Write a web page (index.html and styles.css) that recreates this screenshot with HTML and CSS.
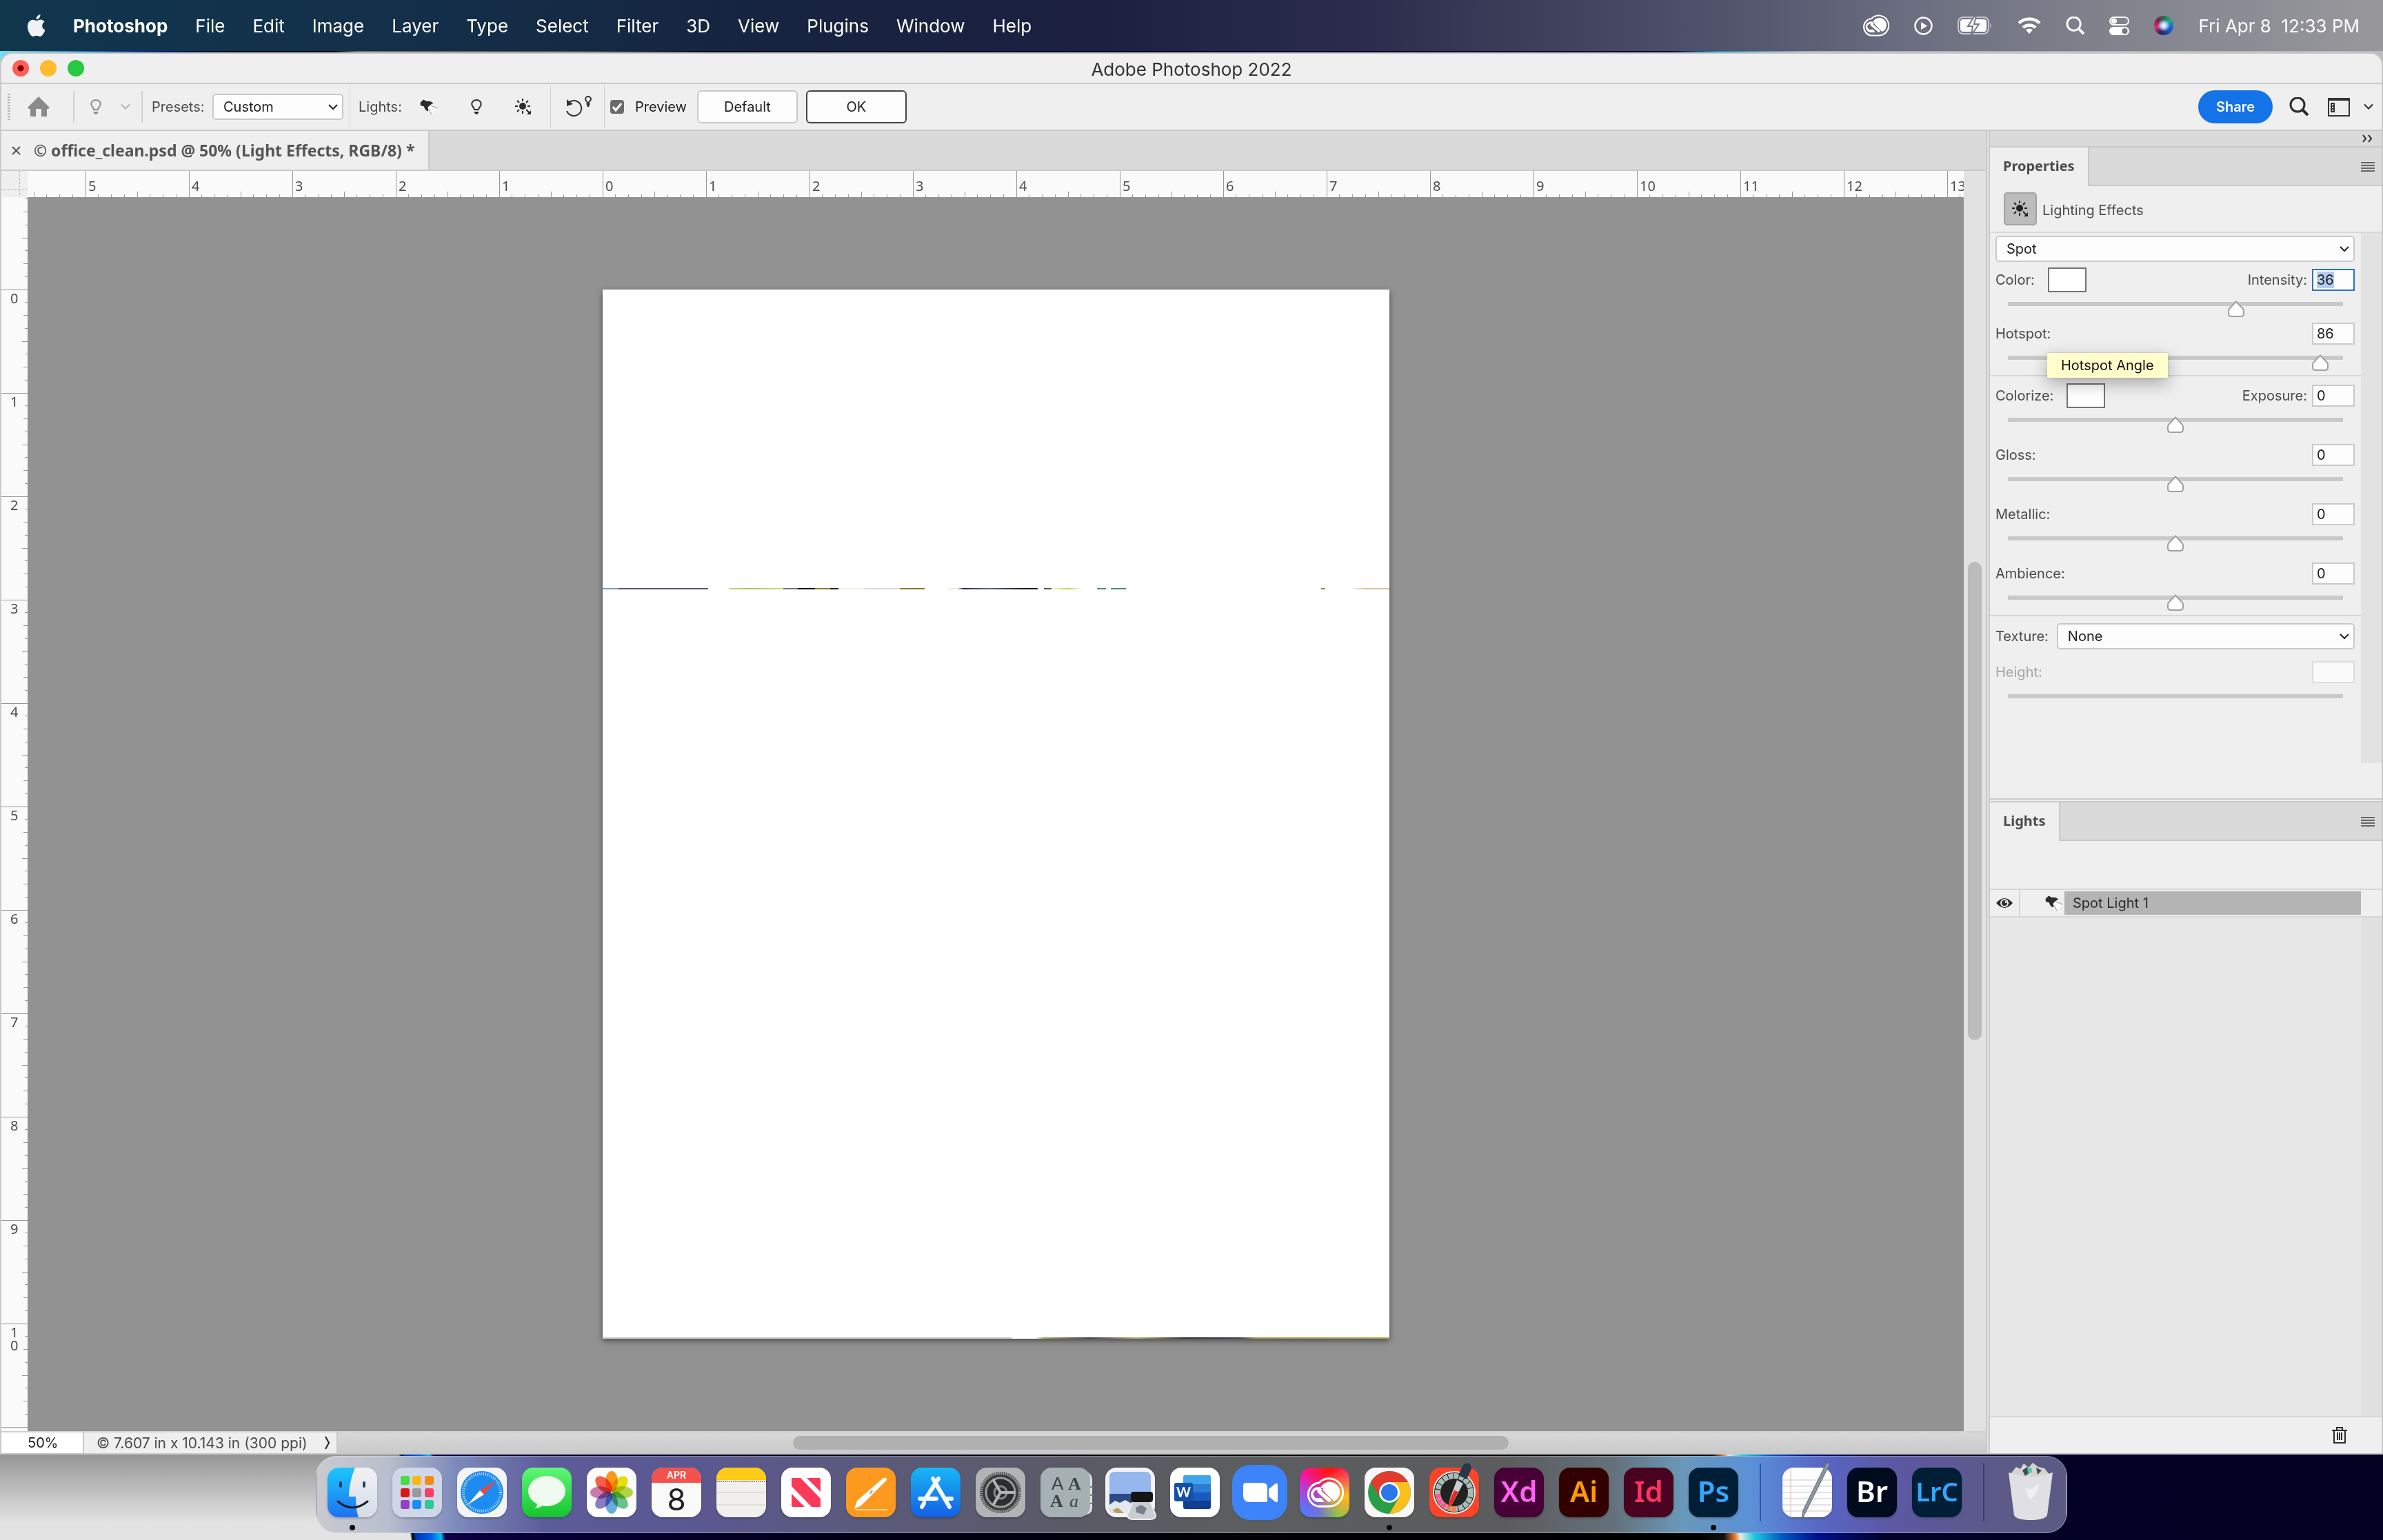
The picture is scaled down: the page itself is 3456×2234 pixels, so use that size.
FILE: index.html
```html
<!DOCTYPE html>
<html lang="en">
<head>
  <meta charset="UTF-8">
  <meta name="viewport" content="width=device-width, initial-scale=1.0">
  <title>Adobe Photoshop 2022</title>
  <link rel="stylesheet" href="styles.css">
</head>
<body>
  <!-- shared shapes -->
  <svg class="defs" aria-hidden="true">
    <symbol id="bulb" viewBox="0 0 16 22">
      <path d="M5 15C5 12 1.2 11 1.2 6.8a6.8 5.8 0 0 1 13.6 0C14.800 11 11 12 11 15Z" fill="none" stroke="currentColor" stroke-width="2"/>
      <path d="M4 18h8L9.500 21.500h-3Z" fill="currentColor"/>
    </symbol>
    <symbol id="spot" viewBox="0 0 26 22">
      <path d="M.5 5 5 .5l5 2.500c4-1 8 .5 9.500 3.500l-3 1-5 4.500 1 5.500C9 17 6.500 14 6 10.500L1 9Z" fill="currentColor"/>
      <path d="m12 11 6-5 8 7.500-9 8.500-5-4Z" fill="#fafafa"/>
      <path d="m16 9 9.500 4M12.500 14l4.500 8" stroke="#888" fill="none"/>
    </symbol>
    <symbol id="sun" viewBox="0 0 24 24">
      <circle cx="11" cy="11" r="5" fill="currentColor"/>
      <path d="M11 0v4M11 18v4M0 11h4M18 11h4M3 3l3 3M16 6l3-3M3 19l3-3M16 16l5 5" stroke="currentColor" stroke-width="2"/>
      <path d="M17 23h6v-6Z" fill="currentColor"/>
    </symbol>
    <symbol id="chevron" viewBox="0 0 14 10"><path d="m1 1.500 6 6 6-6" fill="none" stroke="currentColor" stroke-width="2"/></symbol>
    <symbol id="search" viewBox="0 0 28 28">
      <circle cx="12" cy="11" r="10" fill="none" stroke="currentColor" stroke-width="3"/>
      <path d="m19 18 8 8" stroke="currentColor" stroke-width="4"/>
    </symbol>
    <symbol id="lines" viewBox="0 0 20 14"><path d="M0 1h20M0 5h20M0 9h20M0 13h20" stroke="currentColor" stroke-width="2"/></symbol>
    <symbol id="cloud" viewBox="12 20 76 60">
      <path d="M37 77.500H59A27.500 27.500 0 1 0 39 31 A23.500 23.500 0 0 0 37 77.500Z" fill="none" stroke="#fff" stroke-width="4"/>
      <path d="M60 69a20 20 0 1 0-18-28l26 26ZM50 69H38a15 15 0 1 1 10-26l-6 5a8 8 0 1 0-4 13h5Z" fill="#fff"/>
      <path d="m39 48 20 17" stroke="#fff" stroke-width="7" stroke-linecap="round"/>
    </symbol>
  </svg>

  <header class="menubar">
    <svg class="apple" viewBox="0 0 26 32" fill="#eef2f5"><path d="M18.500 0c.3 3.800-2.900 7.300-6 7.200C12 3.700 15.200.3 18.500 0Z"/><path d="M13.300 9c1.400 0 3-1.400 5.500-1.400 2.100 0 4.300 1.100 5.700 3.200-5 3-4 9.800 1 11.700C24 27 20.800 32 18 32c-2 0-2.600-1.200-5-1.200S9.700 32 8 32C4.500 32 0 24.500 0 17.600 0 11 4 7.700 7.700 7.700c2.400 0 4.200 1.300 5.600 1.300Z"/></svg>
    <nav class="menus">
      <button class="app-name">Photoshop</button>
      <button>File</button><button>Edit</button><button>Image</button><button>Layer</button>
      <button>Type</button><button>Select</button><button>Filter</button><button>3D</button>
      <button>View</button><button>Plugins</button><button>Window</button><button>Help</button>
    </nav>
    <div class="status-icons">
      <svg width="40" height="32"><use href="#cloud"/></svg>
      <svg width="27" height="27" viewBox="0 0 27 27"><circle cx="13.500" cy="13.500" r="12" fill="none" stroke="#fff" stroke-width="2.500"/><path d="M10 8v11l9-5.500Z" fill="#fff"/></svg>
      <svg width="51" height="26" viewBox="0 0 51 26"><rect x="1" y="1" width="44" height="24" rx="7" fill="none" stroke="#c4c7d0" stroke-width="2"/><rect x="4" y="4" width="38" height="18" rx="4" fill="#fff"/><path d="M47.500 9q3 4 0 8Z" fill="#c4c7d0"/><path d="m25-1-10 15h7l-2 13 11-16h-7l3-12Z" fill="#fff" stroke="#73778a" stroke-width="2"/></svg>
      <svg width="34" height="26" viewBox="0 0 34 26" fill="none" stroke="#fff" stroke-width="4.500"><path d="M2 9.500a21.500 21.500 0 0 1 30 0M8 16a13 13 0 0 1 18 0"/><path d="m17 25-5-5.500q5-4 10 0Z" fill="#fff" stroke="none"/></svg>
      <svg width="27" height="27"><use href="#search"/></svg>
      <svg width="29" height="27" viewBox="0 0 29 27"><rect x="1" y="1" width="27" height="11" rx="5.500" fill="none" stroke="#fff" stroke-width="2"/><circle cx="7" cy="6.500" r="4" fill="#fff"/><rect y="15" width="29" height="12" rx="6" fill="#fff"/><circle cx="22.500" cy="21" r="4" fill="#747785"/></svg>
      <span class="siri"></span>
      <time>Fri Apr 8 &nbsp;12:33 PM</time>
    </div>
  </header>

  <main class="window">
    <div class="titlebar">
      <div class="lights"><button class="red" aria-label="Close"></button><button class="yellow" aria-label="Minimize"></button><button class="green" aria-label="Zoom"></button></div>
      <h1>Adobe Photoshop 2022</h1>
    </div>

    <div class="options">
      <span class="grip"></span>
      <button class="home" aria-label="Home"><svg width="32" height="30" viewBox="0 0 32 30"><path d="M16 0 32 16l-2 2h-2v11h-8V18h-8v11H4V18H2l-2-2Z" fill="#8b8b8b"/></svg></button>
      <span class="sep short"></span>
      <button class="tool-menu" aria-label="Tool"><svg width="16" height="22"><use href="#bulb"/></svg><svg class="faint" width="14" height="10"><use href="#chevron"/></svg></button>
      <span class="sep short"></span>
      <label class="presets" for="presets">Presets:</label>
      <select id="presets" class="preset-select"><option>Custom</option></select>
      <span class="sep"></span>
      <div class="light-tools">
        <span>Lights:</span>
        <button aria-label="Spot light"><svg width="26" height="22"><use href="#spot"/></svg></button>
        <button aria-label="Point light"><svg width="16" height="22"><use href="#bulb"/></svg></button>
        <button aria-label="Infinite light"><svg width="24" height="24"><use href="#sun"/></svg></button>
      </div>
      <span class="sep"></span>
      <button class="reset" aria-label="Reset light"><svg width="38" height="32" viewBox="0 0 38 32"><path d="M5 10A11 11 0 1 1 1 23" transform="translate(0 -1)" fill="none" stroke="#333" stroke-width="2"/><path d="M1 5v10l9-3Z" fill="#333"/><path d="M32 12c0-4-4-4-4-7a4 4 0 0 1 8 0c0 3-4 3-4 7Z" fill="none" stroke="#333" stroke-width="2"/><path d="M29 11h6l-2 5h-2Z" fill="#333"/></svg></button>
      <span class="sep"></span>
      <input type="checkbox" id="preview" checked>
      <label class="preview" for="preview">Preview</label>
      <button class="btn">Default</button>
      <button class="btn primary">OK</button>
      <div class="options-right">
        <button class="share">Share</button>
        <button aria-label="Search"><svg width="28" height="28"><use href="#search"/></svg></button>
        <button class="layout" aria-label="Workspace"><svg width="32" height="27" viewBox="0 0 32 27"><path d="M1 1h30v25H1Z" fill="none" stroke="#333" stroke-width="2"/><path d="M0 0h32v4H0ZM4 7h6v14H4Z" fill="#333"/><path d="M6 9h2v2H6zM6 13h2v2H6zM6 17h2v2H6z" fill="#efefef"/></svg><svg width="14" height="10"><use href="#chevron"/></svg></button>
      </div>
    </div>

    <div class="workspace">
      <section class="document">
        <div class="doc-tabs">
          <div class="doc-tab"><button aria-label="Close tab"><svg width="13" height="13" viewBox="0 0 13 13"><path d="m1 1 11 11M12 1 1 12" stroke="#555" stroke-width="2"/></svg></button><span>© office_clean.psd @ 50% (Light Effects, RGB/8) *</span></div>
        </div>
        <div class="view">
          <div class="corner"></div>
          <div class="ruler-x"><span>5</span><span>4</span><span>3</span><span>2</span><span>1</span><span>0</span><span>1</span><span>2</span><span>3</span><span>4</span><span>5</span><span>6</span><span>7</span><span>8</span><span>9</span><span>10</span><span>11</span><span>12</span><span>13</span></div>
          <div class="scroll-y"><div class="thumb"></div></div>
          <div class="ruler-y"><span>0</span><span>1</span><span>2</span><span>3</span><span>4</span><span>5</span><span>6</span><span>7</span><span>8</span><span>9</span><span>1<br>0</span><span>1</span></div>
          <div class="canvas"><div class="page"><div class="streak"></div><div class="streak-bottom"></div></div></div>
        </div>
        <div class="statusbar">
          <input class="zoom" aria-label="Zoom level" value="50%">
          <button class="doc-info"><span>© 7.607 in x 10.143 in (300 ppi)</span><svg width="8" height="20" viewBox="0 0 8 20"><path d="m1 1 5 9-5 9" fill="none" stroke="#222" stroke-width="2"/></svg></button>
          <div class="scroll-x"><div class="thumb"></div></div>
        </div>
      </section>

      <aside class="panels">
        <section class="properties">
          <div class="collapse"><button aria-label="Collapse panels"><svg width="16" height="12" viewBox="0 0 16 12"><path d="m1 1 4 5-4 5M9 1l4 5-4 5" fill="none" stroke="#222" stroke-width="2"/></svg></button></div>
          <div class="panel-tabs"><h2>Properties</h2><button aria-label="Panel menu"><svg width="20" height="14"><use href="#lines"/></svg></button></div>
          <div class="panel-head"><span class="badge"><svg width="24" height="24"><use href="#sun"/></svg></span><span class="head-text">Lighting Effects</span></div>
          <form class="props">
            <div class="group first">
              <select class="kind" aria-label="Light type"><option>Spot</option></select>
              <div class="prop">
                <div class="line"><span>Color:</span><button type="button" class="swatch" aria-label="Color"></button><label for="intensity">Intensity:</label><input id="intensity" class="num" value="36"></div>
                <input type="range" aria-label="Intensity" min="-100" max="100" value="38">
              </div>
              <div class="prop">
                <div class="line"><label for="hotspot">Hotspot:</label><input id="hotspot" class="num" value="86"></div>
                <input type="range" aria-label="Hotspot" min="0" max="90" value="86">
                <div class="tooltip" role="tooltip">Hotspot Angle</div>
              </div>
            </div>
            <div class="group">
              <div class="prop">
                <div class="line"><span>Colorize:</span><button type="button" class="swatch" aria-label="Colorize"></button><label for="exposure">Exposure:</label><input id="exposure" class="num" value="0"></div>
                <input type="range" aria-label="Exposure" min="-100" max="100" value="0">
              </div>
              <div class="prop">
                <div class="line"><label for="gloss">Gloss:</label><input id="gloss" class="num" value="0"></div>
                <input type="range" aria-label="Gloss" min="-100" max="100" value="0">
              </div>
              <div class="prop">
                <div class="line"><label for="metallic">Metallic:</label><input id="metallic" class="num" value="0"></div>
                <input type="range" aria-label="Metallic" min="-100" max="100" value="0">
              </div>
              <div class="prop">
                <div class="line"><label for="ambience">Ambience:</label><input id="ambience" class="num" value="0"></div>
                <input type="range" aria-label="Ambience" min="-100" max="100" value="0">
              </div>
            </div>
            <div class="group last">
              <div class="texture"><label for="texture">Texture:</label><select id="texture"><option>None</option></select></div>
              <div class="prop disabled">
                <div class="line"><label for="height">Height:</label><input id="height" class="num" disabled></div>
                <input type="range" aria-label="Height" disabled>
              </div>
            </div>
          </form>
        </section>

        <section class="lights-panel">
          <div class="panel-tabs"><h2>Lights</h2><button aria-label="Panel menu"><svg width="20" height="14"><use href="#lines"/></svg></button></div>
          <ul class="light-list">
            <li>
              <button class="eye" aria-label="Visibility"><svg width="26" height="18" viewBox="0 0 26 18"><path d="M1 9Q13-5 25 9 13 23 1 9Z" fill="#2c2c2c"/><circle cx="13" cy="9" r="6" fill="#f0f0f0"/><circle cx="13" cy="9" r="4" fill="#2c2c2c"/><circle cx="15" cy="7.500" r="1.500" fill="#f0f0f0"/></svg></button>
              <span class="kind-icon"><svg width="26" height="22"><use href="#spot"/></svg></span>
              <span class="light-name">Spot Light 1</span>
            </li>
          </ul>
          <div class="list-rest"></div>
          <div class="panel-foot"><button aria-label="Delete"><svg width="22" height="24" viewBox="0 0 22 24" fill="none" stroke="#2c2c2c" stroke-width="2"><path d="M0 5h22M7 5V1h8v4M3 5v18h16V5M8 8v11M11 8v11M14 8v11"/></svg></button></div>
        </section>
      </aside>
    </div>
  </main>

  <footer class="desktop">
    <div class="dock">
      <a href="#" class="icon running" aria-label="Finder"><svg viewBox="0 0 72 72"><defs><linearGradient id="f1" x2="0" y2="1"><stop stop-color="#1ac8fd"/><stop offset="1" stop-color="#2071f1"/></linearGradient><linearGradient id="f2" x2="0" y2="1"><stop stop-color="#f1f1f3"/><stop offset="1" stop-color="#d6dde8"/></linearGradient></defs><rect width="72" height="72" rx="16" fill="url(#f2)"/><path d="M16 0h24C34 15 31 28 31 42h10c0 12 1 21 4 30H16A16 16 0 0 1 0 56V16A16 16 0 0 1 16 0Z" fill="url(#f1)"/><path d="M19 22v5M53 22v5" stroke="#27415b" stroke-width="4" stroke-linecap="round"/><path d="M15 49q21 18 43 0" fill="none" stroke="#18202c" stroke-width="3" stroke-linecap="round"/></svg></a>
      <a href="#" class="icon" aria-label="Launchpad"><svg viewBox="0 0 72 72"><rect width="72" height="72" rx="16" fill="#d0d7e8"/><g><rect x="12" y="12" width="13" height="13" rx="3" fill="#48dc48"/><rect x="29" y="12" width="13" height="13" rx="3" fill="#fdb814"/><rect x="47" y="12" width="13" height="13" rx="3" fill="#f58a14"/><rect x="12" y="30" width="13" height="13" rx="3" fill="#d81818"/><rect x="29" y="30" width="13" height="13" rx="3" fill="#989a9e"/><rect x="47" y="30" width="13" height="13" rx="3" fill="#fa3d62"/><rect x="12" y="47" width="13" height="13" rx="3" fill="#9440c8"/><rect x="29" y="47" width="13" height="13" rx="3" fill="#1590f4"/><rect x="47" y="47" width="13" height="13" rx="3" fill="#30c898"/></g></svg></a>
      <a href="#" class="icon" aria-label="Safari"><svg viewBox="0 0 72 72"><rect width="72" height="72" rx="16" fill="#f4f4f5"/><circle cx="36" cy="36" r="31" fill="#1e8bf0"/><circle cx="36" cy="36" r="27" fill="none" stroke="#d8ecff" stroke-width="4" stroke-dasharray="1 2"/><path d="m57 18-18 21-6-6Z" fill="#f04438"/><path d="m15 54 18-21 6 6Z" fill="#fff"/></svg></a>
      <a href="#" class="icon" aria-label="Messages"><svg viewBox="0 0 72 72"><defs><linearGradient id="m" x2="0" y2="1"><stop stop-color="#5ff777"/><stop offset="1" stop-color="#14c52e"/></linearGradient></defs><rect width="72" height="72" rx="16" fill="url(#m)"/><ellipse cx="36" cy="34" rx="27" ry="22" fill="#eefbee"/><path d="M22 50q1 6-4 9 9 0 13-5Z" fill="#dcf7dc"/></svg></a>
      <a href="#" class="icon" aria-label="Photos"><svg viewBox="0 0 72 72"><rect width="72" height="72" rx="16" fill="#fcfcfc"/><g class="petals"><ellipse cx="36" cy="20" rx="9" ry="15" fill="#fb9a1c"/><ellipse cx="36" cy="20" rx="9" ry="15" fill="#e8e012" transform="rotate(45 36 36)"/><ellipse cx="36" cy="20" rx="9" ry="15" fill="#b4d648" transform="rotate(90 36 36)"/><ellipse cx="36" cy="20" rx="9" ry="15" fill="#6cc490" transform="rotate(135 36 36)"/><ellipse cx="36" cy="20" rx="9" ry="15" fill="#6cace0" transform="rotate(180 36 36)"/><ellipse cx="36" cy="20" rx="9" ry="15" fill="#8a80c4" transform="rotate(225 36 36)"/><ellipse cx="36" cy="20" rx="9" ry="15" fill="#cc7cb0" transform="rotate(270 36 36)"/><ellipse cx="36" cy="20" rx="9" ry="15" fill="#f8604c" transform="rotate(315 36 36)"/></g></svg></a>
      <a href="#" class="icon calendar"><span class="month">APR</span><span class="day">8</span></a>
      <a href="#" class="icon" aria-label="Notes"><svg viewBox="0 0 72 72"><rect width="72" height="72" rx="16" fill="#f1f0ec"/><path d="M0 18v-2A16 16 0 0 1 16 0h40a16 16 0 0 1 16 16v2Z" fill="#fdcb18"/><path d="M0 20h72" stroke="#a09a80" stroke-width="2" stroke-dasharray="2 1"/><path d="M0 36h72M0 54h72" stroke="#cfcdc6"/></svg></a>
      <a href="#" class="icon" aria-label="News"><svg viewBox="0 0 72 72"><rect width="72" height="72" rx="16" fill="#fff"/><path d="M15 15h13l29 30v12H44L15 27ZM37 15h18q2 0 2 2v18ZM15 38l19 19H17q-2 0-2-2Z" fill="#fb3a5a"/></svg></a>
      <a href="#" class="icon" aria-label="Pages"><svg viewBox="0 0 72 72"><rect width="72" height="72" rx="16" fill="#fc9a20"/><path d="M14 61h46" stroke="#ffd9a0" stroke-width="2"/><path d="m12 60 4-12 38-33q5-2 5 3L22 55Z" fill="#fdfdfd"/><path d="m35 38 3-5" stroke="#999" stroke-width="2"/></svg></a>
      <a href="#" class="icon" aria-label="App Store"><svg viewBox="0 0 72 72"><defs><linearGradient id="as" x2="0" y2="1"><stop stop-color="#17b7f7"/><stop offset="1" stop-color="#165fe4"/></linearGradient></defs><rect width="72" height="72" rx="16" fill="url(#as)"/><path d="m40 16-20 31M32 16l24 41M13 45h24M49 45h10M19 52l-3 5" stroke="#f4faff" stroke-width="6" stroke-linecap="round"/></svg></a>
      <a href="#" class="icon" aria-label="System Preferences"><svg viewBox="0 0 72 72"><rect width="72" height="72" rx="16" fill="#b0b4b4"/><circle cx="36" cy="36" r="30" fill="#3a3b3d"/><circle cx="36" cy="36" r="28" fill="none" stroke="#999" stroke-width="4" stroke-dasharray="2 1"/><circle cx="36" cy="36" r="21" fill="#2c2d2f" stroke="#9b9b9b" stroke-width="3"/><circle cx="36" cy="36" r="9" fill="none" stroke="#888" stroke-width="3"/><path d="M36 36h21M36 36 25 17M36 36 25 55" stroke="#b4b4b4" stroke-width="4"/></svg></a>
      <a href="#" class="icon" aria-label="Font Book"><svg viewBox="0 0 72 72" class="fontbook"><path d="M60 5q15 0 15 14v40q0 8-12 10Z" fill="#dfe2e2"/><path d="M70 28h6M70 40h6M70 52h6" stroke="#777" stroke-width="2"/><rect width="72" height="72" rx="16" fill="#a6b1b4"/><text x="16" y="32" font-family="Liberation Sans">A</text><text x="40" y="32" font-family="Liberation Serif" font-weight="bold">A</text><text x="14" y="57" font-family="Liberation Serif" font-weight="bold">A</text><text x="42" y="57" font-family="Liberation Serif" font-style="italic">a</text></svg></a>
      <a href="#" class="icon" aria-label="Preview"><svg viewBox="0 0 72 72"><rect width="72" height="72" rx="16" fill="#f2f3f4"/><path d="M14 6h44q8 0 8 8v26H6V14q0-8 8-8Z" fill="#96b6ee"/><path d="M6 38h60v20q0 8-8 8H14q-8 0-8-8Z" fill="#2c4a84"/><path d="m6 54 8-6 7 3 8-4 9 5 7-2-4 16H14q-8 0-8-8Z" fill="#e2e8ee"/><path d="m10 62 8-4 9 8H16Z" fill="#b99b62"/><path d="M40 49h25l8 20q0 6-8 6H40q-8 0-8-6Z" fill="#c9cdd1" stroke="#eee" stroke-width="2"/><path d="m44 58 8-4 8 5-4 9-11-3Z" fill="#777f8c"/><rect x="37" y="35" width="32" height="15" rx="4" fill="#141414"/></svg></a>
      <a href="#" class="icon" aria-label="Word"><svg viewBox="0 0 72 72"><rect width="72" height="72" rx="16" fill="#fff"/><path d="M21 11h36q2 0 2 3v10H19V14q0-3 2-3Z" fill="#41a5ee"/><path d="M19 24h40v12H19Z" fill="#2b7cd3"/><path d="M19 36h40v12H19Z" fill="#185abd"/><path d="M19 48h40v9q0 3-3 3H22q-3 0-3-3Z" fill="#103f91"/><rect x="6" y="22" width="27" height="27" rx="3" fill="#1450a8"/><text x="9" y="43" font-family="Lato" font-weight="bold" font-size="20" fill="#fff">W</text></svg></a>
      <a href="#" class="icon" aria-label="Zoom"><svg viewBox="0 0 72 72"><rect x="-4" y="-4" width="80" height="80" rx="26" fill="#3d84fb"/><path d="M16 22h24q7 0 7 7v21H22q-10 0-10-9V26q0-4 4-4ZM49 31l10-8q3-1 3 2v23q0 3-3 2l-10-8Z" fill="#fff"/></svg></a>
      <a href="#" class="icon creative" aria-label="Creative Cloud"><svg viewBox="0 0 72 72"><use href="#cloud" x="8" y="14" width="56" height="44"/></svg></a>
      <a href="#" class="icon running" aria-label="Chrome"><svg viewBox="0 0 72 72"><rect width="72" height="72" rx="16" fill="#f7f7f7"/><circle cx="36" cy="36" r="31" fill="#2a9d48"/><path d="M9 21A31 31 0 0 1 63 21H36L23 44Z" fill="#e33b2e"/><path d="M36 21h27a31 31 0 0 1-27 46l14-24Z" fill="#fcc01e"/><circle cx="36" cy="36" r="15" fill="#fff"/><circle cx="36" cy="36" r="12" fill="#2b76ea"/></svg></a>
      <a href="#" class="icon" aria-label="Digital Color Meter"><svg viewBox="0 0 72 72"><rect width="72" height="72" rx="16" fill="#fd4328"/><circle cx="36" cy="36" r="30" fill="#222" stroke="#eee" stroke-width="2"/><circle cx="36" cy="36" r="24" fill="none" stroke="#a9bdb8" stroke-width="8" stroke-dasharray="7 1"/><path d="M12 38a24 24 0 0 0 12 19" fill="none" stroke="#f85a90" stroke-width="8" stroke-dasharray="7 1"/><path d="M25 57a24 24 0 0 0 14 3" fill="none" stroke="#f08458" stroke-width="8" stroke-dasharray="7 1"/><path d="m40 18 9 5-16 30-6 5 3-14Z" fill="#c8ced0"/><path d="m36 33 6 2-9 18-6 5 2-10Z" fill="#e32c22"/><path d="m47 0q4-8 10-6 6 3 3 10l-6 13-12-6Z" fill="#26384a"/></svg></a>
      <a href="#" class="icon adobe xd">Xd</a>
      <a href="#" class="icon adobe ai">Ai</a>
      <a href="#" class="icon adobe id">Id</a>
      <a href="#" class="icon adobe ps running">Ps</a>
      <span class="dock-sep"></span>
      <a href="#" class="icon" aria-label="TextEdit"><svg viewBox="0 0 72 72"><rect width="72" height="72" rx="16" fill="#fdfdfd"/><path d="M0 18h72M0 27h72M0 36h72M0 45h72M0 54h72M0 63h72" stroke="#c9c9c9"/><path d="M12 0v72" stroke="#f3b4b4"/><path d="m64-7 5 1-35 70-6 12 2-14Z" fill="#8796a4" stroke="#5c6771"/></svg></a>
      <a href="#" class="icon adobe br">Br</a>
      <a href="#" class="icon adobe lrc">LrC</a>
      <span class="dock-sep"></span>
      <a href="#" class="icon trash" aria-label="Trash"><svg viewBox="0 0 72 72"><path d="m7 9 8-10 6 3 5-8 7 6 6-7 8 6 9 2 8 10-20 6H17Z" fill="#d5d2d0"/><path d="m24 4 7-5 4 8-7 5ZM44 0l8 4-6 6Z" fill="#3f4a55"/><path d="m31 2 6-2 1 7-6 1Z" fill="#48c8a0"/><path d="M4 7q32 12 64 0l-8 62q-3 7-24 7T12 69Z" fill="#e0e0e4"/><path d="M28 30q12 4 20-8-2 20-14 24Z" fill="#f0f0f2"/></svg></a>
    </div>
  </footer>
  <script>
    document.getElementById('intensity').select();
  </script>
</body>
</html>
```
FILE: styles.css
```css
* {
  box-sizing: border-box;
}
body {
  margin: 0;
  height: 100vh;
  display: flex;
  flex-direction: column;
  overflow: hidden;
  font-family: Inter, "Liberation Sans", sans-serif;
  font-size: 20px;
  color: #4b4b4b;
  background: linear-gradient(90deg, #7adcf0 0, #1a9ccc 3%, #0428a0 6%, #000 10%, #000 14%, #777 15%, #555 24%, #010020 30%, #020230 70%, #2088c0 72%, #a8b0b8 76%, #bbb 100%);
}
button, input, select {
  font: inherit;
  color: inherit;
}
button {
  padding: 0;
  border: none;
  background: none;
}
a {
  text-decoration: none;
}
svg {
  display: block;
  overflow: visible;
}
.defs {
  position: absolute;
  width: 0;
  height: 0;
}

/* menu bar */
.menubar {
  flex: none;
  height: 74px;
  margin-bottom: 2px;
  padding: 0 34px 0 40px;
  display: flex;
  align-items: center;
  color: #fff;
  font-size: 26px;
  background: linear-gradient(90deg, #10364c 0%, #13304a 16%, #16243f 32%, #1b2040 45%, #2b2c4b 57%, #55586f 74%, #686b7e 79%, #7d7f8a 87%, #98989c 100%);
}
.apple {
  width: 26px;
  height: 32px;
  margin-right: 40px;
}
.menus {
  display: flex;
  gap: 40px;
}
.app-name {
  font-weight: 700;
}
.status-icons {
  margin-left: auto;
  display: flex;
  align-items: center;
  gap: 36px;
}
.siri {
  width: 28px;
  height: 28px;
  border-radius: 50%;
  background: radial-gradient(circle, #fff 0, #b8dcff 18%, transparent 45%), conic-gradient(#2a6a50, #18b080, #2060e0, #1848a0, #302060, #e03070, #802048, #2a6a50);
}

/* window */
.window {
  flex: 1;
  min-height: 0;
  display: flex;
  flex-direction: column;
  border: 2px solid #c9c9c9;
  border-radius: 18px 18px 0 0;
  background: #efefef;
}
.titlebar {
  flex: none;
  height: 44px;
  padding: 0 16px;
  display: grid;
  grid-template-columns: 1fr auto 1fr;
  align-items: center;
  border-bottom: 2px solid #c9c9c9;
}
.titlebar h1 {
  margin: 0;
  padding-top: 2px;
  font-size: 26px;
  font-weight: 400;
  color: #333;
}
.lights {
  display: flex;
  gap: 16px;
}
.lights button {
  width: 24px;
  height: 24px;
  border-radius: 50%;
}
.red {
  background: radial-gradient(circle, #780000 4px, #fe5f57 5px);
}
.yellow {
  background: #febc2e;
}
.green {
  background: #28c840;
}

/* options bar */
.options {
  flex: none;
  height: 68px;
  display: flex;
  align-items: center;
  border-bottom: 2px solid #c9c9c9;
}
.grip {
  width: 4px;
  height: 38px;
  margin: 0 25px 0 9px;
  background: repeating-linear-gradient(#b4b4b4 0 2px, transparent 2px 4px);
}
.sep {
  width: 1px;
  height: 62px;
  background: #d2d2d2;
}
.sep.short {
  width: 2px;
  height: 46px;
}
.home {
  margin-right: 34px;
}
.tool-menu {
  display: flex;
  align-items: center;
  gap: 28px;
  margin: 0 16px 0 23px;
  color: #8b8b8b;
}
.faint {
  color: #b4b4b4;
}
.presets {
  width: 88px;
  margin-left: 13px;
}
select {
  appearance: none;
  height: 38px;
  padding: 0 14px;
  border: 2px solid #c9c9c9;
  border-radius: 5px;
  color: #222;
  background: #fdfdfd url("data:image/svg+xml,%3Csvg xmlns='http://www.w3.org/2000/svg' width='14' height='10'%3E%3Cpath d='m1 2 6 6 6-6' fill='none' stroke='%23222' stroke-width='2'/%3E%3C/svg%3E") no-repeat right 6px center;
}
.preset-select {
  width: 190px;
  margin-right: 9px;
}
.light-tools {
  display: flex;
  align-items: center;
  gap: 48px;
  padding: 0 27px 0 12px;
}
.light-tools span {
  margin-right: -22px;
}
.light-tools button {
  color: #2c2c2c;
}
.reset {
  margin: 0 17px 0 22px;
}
#preview {
  appearance: none;
  width: 20px;
  height: 20px;
  margin: 0 16px 0 8px;
  border-radius: 4px;
  background: #6a6a6a url("data:image/svg+xml,%3Csvg xmlns='http://www.w3.org/2000/svg' width='20' height='20'%3E%3Cpath d='m4 10 4 5 8-10' fill='none' stroke='%23fff' stroke-width='3'/%3E%3C/svg%3E");
}
.preview {
  width: 90px;
  color: #222;
}
.btn {
  width: 146px;
  height: 48px;
  margin-right: 12px;
  border: 2px solid #c9c9c9;
  border-radius: 6px;
  background: #fdfdfd;
  color: #222;
}
.btn.primary {
  border-color: #444;
}
.options-right {
  margin-left: auto;
  padding-right: 12px;
  display: flex;
  align-items: center;
  gap: 24px;
  color: #2c2c2c;
}
.share {
  width: 108px;
  height: 48px;
  border-radius: 24px;
  background: #1473e6;
  color: #fff;
  font-weight: 600;
}
.layout {
  display: flex;
  align-items: center;
  gap: 20px;
  margin-left: 4px;
}

/* document */
.workspace {
  flex: 1;
  min-height: 0;
  display: flex;
  gap: 2px;
  background: #e2e2e2;
}
.document {
  flex: 1;
  min-width: 0;
  display: flex;
  flex-direction: column;
  border-right: 2px solid #c9c9c9;
}
.doc-tabs {
  flex: none;
  height: 58px;
  display: flex;
  background: #dadada;
  border-bottom: 2px solid #c9c9c9;
}
.doc-tab {
  display: flex;
  align-items: center;
  gap: 19px;
  padding: 0 20px 0 15px;
  border-right: 2px solid #c9c9c9;
  background: #efefef;
  font-family: "Noto Sans", sans-serif;
  font-size: 23px;
  font-weight: 700;
  color: #555;
}
.view {
  flex: 1;
  min-height: 0;
  display: grid;
  grid-template-columns: 38px 1fr 32px;
  grid-template-rows: 38px 1fr;
}
.corner {
  background:
    repeating-linear-gradient(90deg, #aaa 0 1px, transparent 1px 2px) 0 26px / 100% 1px no-repeat,
    repeating-linear-gradient(#aaa 0 1px, transparent 1px 2px) 26px 0 / 1px 100% no-repeat,
    #efefef;
}
.ruler-x, .ruler-y {
  display: flex;
  overflow: hidden;
  background-color: #fafafa;
  font-family: "Noto Sans", sans-serif;
  line-height: 19px;
}
.ruler-x {
  grid-column: 2;
  padding: 12px 0 0 84px;
  background-image: url("data:image/svg+xml,%3Csvg xmlns='http://www.w3.org/2000/svg' width='150' height='38'%3E%3Cpath d='M.5 0v38M18.500 34v4M37.500 34v4M56.500 34v4M75.500 30v8M93.500 34v4M112.500 34v4M131.500 34v4' stroke='%23999'/%3E%3C/svg%3E");
  background-position: 84px 0;
}
.ruler-x span {
  flex: none;
  width: 150px;
  padding-left: 4px;
}
.ruler-y {
  grid-column: 1;
  grid-row: 2;
  flex-direction: column;
  padding-top: 134px;
  background-image: url("data:image/svg+xml,%3Csvg xmlns='http://www.w3.org/2000/svg' width='38' height='150'%3E%3Cpath d='M0 .5h38M34 18.500h4M32 37.500h6M34 56.500h4M30 75.500h8M34 93.500h4M32 112.500h6M34 131.500h4' stroke='%23999'/%3E%3C/svg%3E");
  background-position: 0 134px;
}
.ruler-y span {
  flex: none;
  height: 150px;
  padding: 3px 0 0 13px;
}
.scroll-y {
  grid-column: 3;
  grid-row: 1 / 3;
  display: flex;
  align-items: center;
  justify-content: center;
  background: #e2e2e2;
}
.thumb {
  border-radius: 10px;
  background: #bcbcbc;
}
.scroll-y .thumb {
  width: 20px;
  height: 38%;
}
.canvas {
  display: grid;
  place-items: center;
  overflow: hidden;
  background: #929292;
}
.page {
  width: 1141px;
  height: 1522px;
  display: flex;
  flex-direction: column;
  justify-content: space-between;
  padding-top: 433px;
  background: #fff;
  box-shadow: 0 3px 8px rgba(0, 0, 0, .5);
}
.streak, .streak-bottom {
  height: 2px;
}
.streak {
  background: linear-gradient(90deg, #7a9cc8 0 23px, #5d5868 23px 153px, #fff 153px 183px, #cfd480 183px, #b4c060 210px, #d4d888 262px, #777 262px 283px, #111 283px 308px, #8a8030 308px 330px, #222 330px 342px, #f0f0e0 342px 380px, #e0d4e2 380px 430px, #8a7a30 433px 467px, #fff 467px 500px, #f0f0d0 500px 515px, #302838 523px, #5a7088 560px, #201820 610px 630px, #fff 632px 640px, #555 640px 650px, #f8f8e0 652px, #c4d040 674px, #fff 697px 717px, #4c9070 717px 730px, #fff 730px 737px, #4c9070 737px 759px, #fff 759px 1042px, #948a50 1042px 1048px, #fff 1048px 1085px, #d0c898 1105px);
}
.streak-bottom {
  background: linear-gradient(90deg, #ccc 0 52%, #fff 52% 55%, #b8a860 56%, #445 62%, #c0b070 68%, #333 74%, #445 81%, #a8a050 83%, #b0a850 100%);
}
.statusbar {
  flex: none;
  height: 32px;
  display: flex;
  border-top: 2px solid #d0d0d0;
  background: linear-gradient(#d8d8d8, #cacaca);
}
.zoom {
  width: 118px;
  padding: 0 0 0 38px;
  border: none;
  background: #fff;
  color: #222;
}
.doc-info {
  width: 370px;
  padding: 0 9px 0 18px;
  display: flex;
  align-items: center;
  justify-content: space-between;
  border: solid #c9c9c9;
  border-width: 0 2px;
  background: #efefef;
  font-size: 21px;
}
.scroll-x {
  flex: 1;
  margin-right: 32px;
  display: flex;
  align-items: center;
  justify-content: center;
}
.scroll-x .thumb {
  width: 44%;
  height: 20px;
  background: #b0b0b0;
}

/* panels */
.panels {
  width: 570px;
  display: flex;
  flex-direction: column;
  border-left: 2px solid #c9c9c9;
  background: #efefef;
}
.collapse {
  height: 24px;
  padding-right: 12px;
  display: flex;
  align-items: center;
  justify-content: flex-end;
  background: #dadada;
  border-bottom: 2px solid #c9c9c9;
}
.panel-tabs {
  height: 56px;
  display: flex;
  align-items: stretch;
  justify-content: space-between;
  background: linear-gradient(#c9c9c9, #c9c9c9) bottom / 100% 2px no-repeat #dadada;
}
.panel-tabs h2 {
  margin: 0;
  padding: 0 19px;
  line-height: 54px;
  font-family: "Noto Sans", sans-serif;
  font-size: 20px;
  font-weight: 700;
  background: #efefef;
  border-right: 2px solid #c9c9c9;
}
.panel-tabs button {
  padding-right: 10px;
  color: #666;
}
.panel-head {
  height: 68px;
  padding-left: 20px;
  display: flex;
  align-items: center;
  gap: 8px;
  border-bottom: 2px solid #d6d6d6;
}
.head-text {
  padding-top: 4px;
}
.badge {
  width: 48px;
  height: 48px;
  display: grid;
  place-items: center;
  border: 2px solid #a2a2a2;
  border-radius: 5px;
  background: #bcbcbc;
  color: #222;
}
.properties {
  padding-bottom: 51px;
  border-bottom: 2px solid #c9c9c9;
}
.props {
  border-right: 30px solid #e2e2e2;
}
.group {
  padding: 10px 9px 8px 8px;
  border-bottom: 2px solid #d6d6d6;
}
.group.first {
  padding-top: 4px;
}
.group.last {
  padding-bottom: 80px;
  border-bottom: none;
}
.kind {
  width: 100%;
  margin-bottom: 8px;
}
.prop {
  position: relative;
}
.prop + .prop {
  margin-top: 16px;
}
.first .prop + .prop {
  margin-top: 8px;
}
.line {
  height: 36px;
  display: flex;
  align-items: center;
}
.num {
  width: 62px;
  height: 32px;
  margin-left: auto;
  padding: 0 5px;
  border: 2px solid #c9c9c9;
  background: #fdfdfd;
  color: #222;
}
.swatch {
  width: 56px;
  height: 36px;
  margin: 0 auto 0 19px;
  border: 2px solid #747474;
  background: #fff;
}
.swatch + label + .num {
  margin-left: 7px;
}
.num:focus {
  outline: none;
  border-color: #2a6fcb;
}
.num::selection {
  background: #b4ccf0;
  color: #222;
}
input[type="range"] {
  appearance: none;
  display: block;
  width: calc(100% - 35px);
  height: 34px;
  margin: 0 17px 0 18px;
  background: none;
}
input[type="range"]::-webkit-slider-runnable-track {
  height: 6px;
  background: #c9c9c9;
}
input[type="range"]::-webkit-slider-thumb {
  appearance: none;
  width: 24px;
  height: 24px;
  margin-top: -2px;
  background: url("data:image/svg+xml,%3Csvg xmlns='http://www.w3.org/2000/svg' width='24' height='24'%3E%3Cpath d='M12 1.500 22 12q1 1.500 1 3v4q0 4-4 4H5q-4 0-4-4v-4q0-1.500 1-3Z' fill='%23fff' stroke='%23a0a0a0' stroke-width='2'/%3E%3C/svg%3E");
}
input[type="range"]:disabled::-webkit-slider-thumb {
  visibility: hidden;
}
.tooltip {
  position: absolute;
  top: 46px;
  left: 75px;
  padding: 0 20px;
  z-index: 1;
  line-height: 36px;
  color: #111;
  background: #ffffcc;
  box-shadow: 0 8px 24px rgba(0, 0, 0, .3), 0 0 1px #888;
}
.texture {
  display: flex;
  align-items: center;
  gap: 12px;
  margin-bottom: 15px;
}
.texture select {
  flex: 1;
}
.disabled label {
  color: #a6a6a6;
}
.disabled .num {
  border-color: #dcdcdc;
  background: #fafafa;
}

.lights-panel {
  flex: 1;
  margin-top: 2px;
  display: flex;
  flex-direction: column;
  border-top: 2px solid #c9c9c9;
}
.light-list {
  margin: 69px 0 0;
  padding: 0;
  list-style: none;
  border: solid #d6d6d6;
  border-width: 2px 0;
}
.light-list li {
  height: 38px;
  padding-right: 30px;
  display: flex;
  align-items: center;
}
.eye {
  width: 44px;
  height: 38px;
  display: grid;
  place-items: center;
  border-right: 2px solid #d6d6d6;
}
.kind-icon {
  margin: 0 2px 0 36px;
  color: #2c2c2c;
}
.light-name {
  flex: 1;
  padding-left: 12px;
  line-height: 34px;
  background: #b4b4b4;
  color: #2c2c2c;
}
.list-rest {
  flex: 1;
  border-right: 30px solid #e1e1e1;
  background: #e7e7e7;
}
.panel-foot {
  height: 54px;
  padding-right: 50px;
  display: flex;
  align-items: center;
  justify-content: flex-end;
  border-top: 2px solid #d6d6d6;
}

/* desktop and dock */
.desktop {
  flex: none;
  height: 124px;
  display: flex;
  align-items: flex-start;
  justify-content: center;
  padding-top: 2px;
  background:
    linear-gradient(rgba(0, 0, 0, .34), transparent 80%) 0 0 / 580px 100% no-repeat,
    linear-gradient(82deg, #e3e3e3 590px, #000 593px, #0038b0 598px, #0060e8 620px, #00c0e8 634px, #10004a 640px, #08003c 20%, #010018 35%, #020208 50%, #000 71%, #101010 72%, #f08030 2493px, #e0f0e0 2500px, #20c8e0 2520px, #0058c0 2560px, #04108c 2610px, #030228 2710px, #020122 100%);
}
.dock {
  height: 112px;
  padding: 0 16px 6px;
  display: flex;
  align-items: center;
  gap: 22px;
  border: 1px solid rgba(255, 255, 255, .3);
  border-radius: 30px;
  background: linear-gradient(90deg, #c9cacf 0, #b9bfce 4%, #7c8abb 8%, #5d5c9a 13%, #5a5890 22%, #5a5a78 33%, #5a5a68 42%, #5b5d5e 52%, #5c5c5e 68%, #64707a 74%, #6a98b8 78%, #5a90d8 82%, #5866c4 86%, #5c58a4 90%, #5c5a88 96%, #5a5a84 100%);
}
.icon {
  position: relative;
  width: 72px;
  height: 72px;
  border-radius: 16px;
  box-shadow: 0 2px 3px rgba(0, 0, 0, .2);
}
.icon.trash {
  box-shadow: none;
}
.running::after {
  content: "";
  position: absolute;
  left: 32px;
  top: 83px;
  width: 8px;
  height: 8px;
  border-radius: 50%;
  background: #0a0c12;
}
.petals ellipse {
  mix-blend-mode: multiply;
}
.fontbook text {
  font-size: 26px;
  fill: #3c4345;
}
.calendar {
  display: flex;
  flex-direction: column;
  overflow: hidden;
  text-align: center;
  background: #fafafa;
}
.month {
  line-height: 22px;
  font-size: 14px;
  font-weight: 600;
  color: #fff;
  background: #f4524c;
}
.day {
  line-height: 48px;
  font-size: 44px;
  color: #222;
}
.creative {
  background: radial-gradient(circle at 95% 60%, #ffc010, transparent 55%), radial-gradient(circle at 0 100%, #3090ff, transparent 60%), radial-gradient(circle at 80% 100%, #40e050, transparent 50%), radial-gradient(circle at 60% 0, #ff1500, transparent 60%), #f018d0;
}
.adobe {
  text-align: center;
  font-family: "Noto Sans", sans-serif;
  font-size: 42px;
  font-weight: 600;
  line-height: 68px;
}
.xd {
  background: #470137;
  color: #ff61f6;
}
.ai {
  background: #330000;
  color: #ff9a00;
}
.id {
  background: #49021f;
  color: #ff3366;
}
.ps {
  background: #001e36;
  color: #31a8ff;
}
.br {
  background: #000b1d;
  color: #fff;
}
.lrc {
  background: #001e36;
  color: #31a8ff;
  font-size: 38px;
}
.dock-sep {
  width: 2px;
  height: 84px;
  margin: 0 9px;
  background: rgba(20, 30, 80, .5);
}
```
